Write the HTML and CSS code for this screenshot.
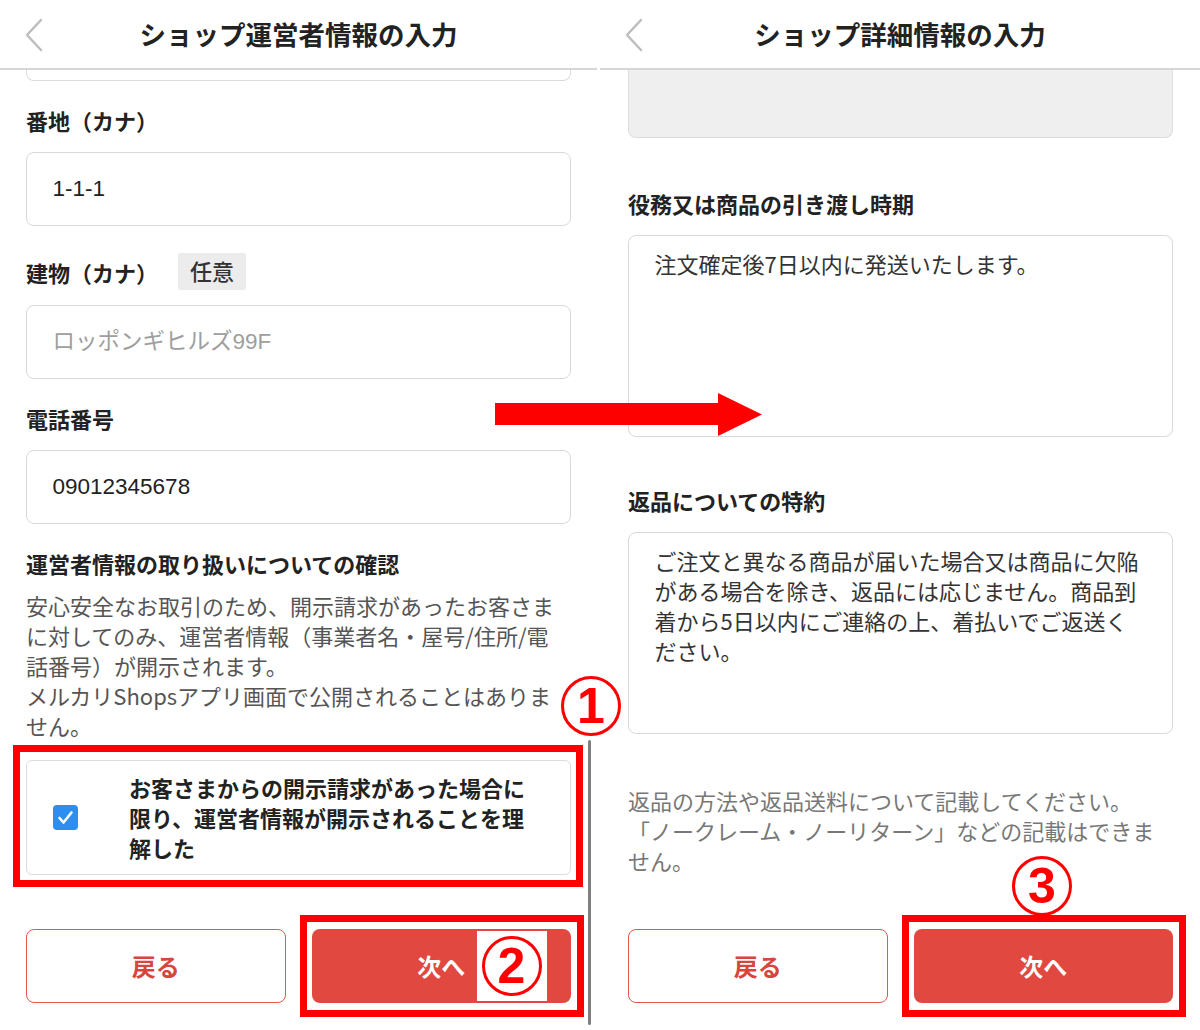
FILE: index.html
```html
<!DOCTYPE html>
<html lang="ja">
  <head>
    <meta charset="UTF-8" />
    <meta name="viewport" content="width=device-width, initial-scale=1.0" />
    <title>ショップ情報の入力</title>
    <link rel="stylesheet" href="styles.css">
  </head>
  <body>
    <div class="page">
      <section class="screen screen-left">
        <header class="bar">
          <svg class="back" width="20" height="34" viewBox="0 0 20 34">
            <polyline points="17,2 3,17 17,32" fill="none" stroke="#bdbdbd" stroke-width="2.5" stroke-linecap="round" stroke-linejoin="round" />
          </svg>
          <h1>ショップ運営者情報の入力</h1>
        </header>

        <div class="body body-left">
          <div class="stub"></div>

          <div class="field">
            <label class="label">番地（カナ）</label>
            <input class="input" type="text" value="1-1-1">
          </div>

          <div class="field">
            <div class="label-row">
              <label class="label">建物（カナ）</label>
              <span class="badge">任意</span>
            </div>
            <input class="input" type="text" placeholder="ロッポンギヒルズ99F">
          </div>

          <div class="field">
            <label class="label">電話番号</label>
            <input class="input" type="text" value="09012345678">
          </div>

          <h2 class="section-title">運営者情報の取り扱いについての確認</h2>
          <p class="note">
            安心安全なお取引のため、開示請求があったお客さま<br>
            に対してのみ、運営者情報（事業者名・屋号/住所/電<br>
            話番号）が開示されます。<br>
            メルカリShopsアプリ画面で公開されることはありま<br>
            せん。
          </p>

          <div class="consent marked">
            <span class="check">
              <svg width="25" height="25" viewBox="0 0 25 25">
                <polyline points="6.5,13 10.5,17.5 18.5,7.5" fill="none" stroke="#fff" stroke-width="2.6" stroke-linecap="round" stroke-linejoin="round" />
              </svg>
            </span>
            <p class="consent-text">お客さまからの開示請求があった場合に限り、運営者情報が開示されることを理解した</p>
          </div>

          <div class="actions">
            <button class="btn btn-back">戻る</button>
            <div class="btn-wrap marked">
              <button class="btn btn-next">次へ</button>
              <span class="num-plate"><span class="num">2</span></span>
            </div>
          </div>
        </div>

        <span class="num num-1">1</span>
        <span class="scroll"></span>
      </section>

      <section class="screen screen-right">
        <header class="bar">
          <svg class="back" width="20" height="34" viewBox="0 0 20 34">
            <polyline points="17,2 3,17 17,32" fill="none" stroke="#bdbdbd" stroke-width="2.5" stroke-linecap="round" stroke-linejoin="round" />
          </svg>
          <h1>ショップ詳細情報の入力</h1>
        </header>

        <div class="body body-right">
          <div class="disabled-box"></div>

          <div class="field field-lg">
            <label class="label">役務又は商品の引き渡し時期</label>
            <textarea class="textarea">注文確定後7日以内に発送いたします。</textarea>
          </div>

          <div class="field field-md">
            <label class="label">返品についての特約</label>
            <textarea class="textarea">ご注文と異なる商品が届いた場合又は商品に欠陥がある場合を除き、返品には応じません。商品到着から5日以内にご連絡の上、着払いでご返送ください。</textarea>
          </div>

          <p class="help">
            返品の方法や返品送料について記載してください。<br>
            「ノークレーム・ノーリターン」などの記載はできま<br>
            せん。
          </p>

          <div class="actions actions-right">
            <button class="btn btn-back">戻る</button>
            <div class="btn-wrap marked">
              <button class="btn btn-next">次へ</button>
            </div>
          </div>
        </div>

        <span class="num num-3">3</span>
      </section>

      <svg class="arrow" width="268" height="43" viewBox="0 0 268 43">
        <polygon points="0,10 223,10 223,0 267,21.5 223,43 223,32 0,32" fill="#fe0000" />
      </svg>
    </div>
  </body>
</html>
```

FILE: styles.css
```css
* {
  box-sizing: border-box;
}

html,
body {
  margin: 0;
  padding: 0;
}

body {
  font-family: "Noto Sans CJK JP", "Noto Sans", sans-serif;
  color: #222;
  background-color: #fff;
  overflow: hidden;
}

.page {
  position: relative;
  display: flex;
  width: 1200px;
  height: 1030px;
}

.screen {
  position: relative;
  height: 1030px;
}

.screen-left {
  width: 597px;
  margin-right: 3px;
}

.screen-right {
  width: 600px;
}

/* cabecera */
.bar {
  position: relative;
  height: 70px;
  border-bottom: 2px solid #d6d6d6;
  display: flex;
  align-items: center;
  justify-content: center;
}

.bar h1 {
  margin: 0 0 2px;
  font-size: 26.5px;
  font-weight: 700;
  color: #222;
}

.back {
  position: absolute;
  left: 24px;
  top: 18px;
}

.body-left {
  padding: 0 26px;
}

.body-right {
  padding: 0 27px 0 28px;
}

.stub {
  height: 11px;
  border: 1.5px solid #dcdcdc;
  border-top: none;
  border-radius: 0 0 8px 8px;
}

.disabled-box {
  height: 68px;
  background-color: #efefef;
  border: 1.5px solid #dcdcdc;
  border-top: none;
  border-radius: 0 0 8px 8px;
}

/* campos */
.field {
  margin-top: 27px;
}

.field-lg {
  margin-top: 53px;
}

.field-md {
  margin-top: 51px;
}

.label {
  display: block;
  font-size: 22px;
  line-height: 24px;
  font-weight: 700;
  color: #222;
  margin-bottom: 20px;
}

.label-row {
  display: flex;
  align-items: center;
  height: 37px;
  margin-bottom: 15px;
}

.label-row .label {
  margin-bottom: 0;
}

.badge {
  margin-left: 20px;
  padding: 0 12px;
  height: 37px;
  line-height: 35px;
  font-size: 22px;
  font-weight: 500;
  color: #333;
  background-color: #ececec;
  border-radius: 2px;
}

.input {
  display: block;
  width: 100%;
  height: 74px;
  padding: 0 25.5px;
  border: 1.5px solid #d9d9d9;
  border-radius: 8px;
  font-family: "Liberation Sans", "Noto Sans CJK JP", sans-serif;
  font-size: 22.5px;
  color: #222;
  background-color: #fff;
  outline: none;
}

.input::placeholder {
  color: #9e9e9e;
}

.textarea {
  display: block;
  width: 100%;
  height: 202px;
  padding: 12px 25.5px;
  border: 1.5px solid #d9d9d9;
  border-radius: 8px;
  font-family: inherit;
  font-size: 22px;
  line-height: 30px;
  color: #333;
  resize: none;
  outline: none;
  overflow: hidden;
}

.section-title {
  margin: 27px 0 15px;
  font-size: 22px;
  line-height: 24px;
  font-weight: 700;
}

.note {
  margin: 0;
  font-size: 22px;
  line-height: 30px;
  color: #555;
}

.help {
  margin: 51px 0 0;
  font-size: 22px;
  line-height: 30px;
  color: #777;
}

/* confirmación */
.consent {
  position: relative;
  margin-top: 20px;
  height: 115px;
  display: flex;
  align-items: center;
  padding-left: 26px;
  border: 1.5px solid #dcdcdc;
  border-radius: 6px;
}

.check {
  width: 25px;
  height: 25px;
  border-radius: 4px;
  background-color: #2b8ef0;
  display: flex;
}

.consent-text {
  margin: 0 0 2px 51px;
  max-width: 405px;
  font-size: 22px;
  line-height: 30px;
  font-weight: 700;
  color: #222;
}

/* botones */
.actions {
  display: grid;
  grid-template-columns: 1fr 1fr;
  gap: 26px;
  margin-top: 54px;
}

.actions-right {
  margin-top: 54px;
}

.btn {
  height: 74px;
  width: 100%;
  padding: 0 0 2px;
  border-radius: 8px;
  font-family: inherit;
  font-size: 24px;
  font-weight: 700;
  cursor: pointer;
}

.btn-back {
  background-color: #fff;
  border: 1.5px solid #e5574e;
  color: #d8453c;
}

.btn-next {
  background-color: #e1483f;
  border: none;
  color: #fff;
}

.btn-wrap {
  position: relative;
  display: flex;
}

/* anotaciones */
.marked::after {
  content: "";
  position: absolute;
  border: 7px solid #fe0000;
  pointer-events: none;
}

.consent.marked::after {
  left: -14px;
  right: -13px;
  top: -16px;
  bottom: -13px;
}

.btn-wrap.marked::after {
  left: -12px;
  right: -13px;
  top: -14px;
  bottom: -14px;
}

.num {
  width: 60px;
  height: 60px;
  border: 3px solid #fe0000;
  border-radius: 50%;
  background-color: #fff;
  color: #fe0000;
  font-family: "Liberation Sans", Arial, sans-serif;
  font-size: 50px;
  font-weight: 700;
  line-height: 54px;
  text-align: center;
}

.num-1 {
  position: absolute;
  left: 561px;
  top: 676px;
}

.num-3 {
  position: absolute;
  left: 412px;
  top: 856px;
}

.num-plate {
  position: absolute;
  left: 165px;
  top: 2px;
  width: 70px;
  height: 70px;
  background-color: #fff;
  display: flex;
  align-items: center;
  justify-content: center;
}

.scroll {
  position: absolute;
  left: 588px;
  top: 740px;
  width: 3px;
  height: 285px;
  background-color: #808080;
  border-radius: 2px;
}

.arrow {
  position: absolute;
  left: 495px;
  top: 393px;
}
```
